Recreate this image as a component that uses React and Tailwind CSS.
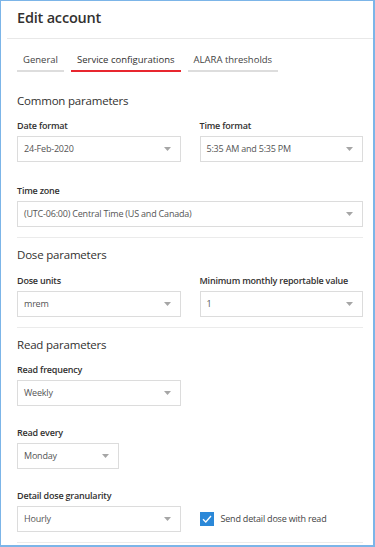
import React from 'react';

const Chevron = () => (
  <svg width="7" height="4" viewBox="0 0 7 4" className="shrink-0">
    <path d="M0 0 L7 0 L3.5 4 Z" fill="#a6a6a6" />
  </svg>
);

const Select = ({ value, className = '' }) => (
  <div className={`h-[26px] border border-[#dcdcdc] bg-white flex items-center justify-between pl-[6px] pr-[9px] ${className}`}>
    <span className="text-[9px] tracking-[-0.2px] text-[#555555] whitespace-nowrap">{value}</span>
    <Chevron />
  </div>
);

const Label = ({ children, className = '' }) => (
  <div className={`text-[9px] tracking-[-0.2px] font-semibold text-[#323130] leading-[16px] mb-[2px] ${className}`}>{children}</div>
);

const Heading = ({ children }) => (
  <div className="text-[11.5px] tracking-[-0.2px] text-[#323130] leading-[20px]">{children}</div>
);

const Divider = () => <div className="h-px bg-[#ebebeb]" />;

export default function App() {
  const tabs = [
    { label: 'General', active: false },
    { label: 'Service configurations', active: true },
    { label: 'ALARA thresholds', active: false },
  ];

  return (
    <div
      className="w-[375px] h-[547px] bg-white border-l border-t border-r-2 border-b-2 border-[#7cb5e8] overflow-hidden"
      style={{ fontFamily: '"Open Sans", "Noto Sans", sans-serif' }}
    >
      <div className="ml-[6px] h-[38px] border-b border-[#e8e8e8] flex items-center pl-[10px]">
        <h1 className="text-[14.5px] tracking-[-0.2px] font-semibold text-[#323130] leading-[24px] -mt-[4px]">Edit account</h1>
      </div>

      <div className="px-[16px] pr-[10px]">
        <div className="flex gap-[7px] mt-[13px]">
          {tabs.map(t => (
            <div
              key={t.label}
              className={`px-[6px] pb-[2px] text-[9.5px] leading-[16px] border-b-2 ${t.active ? 'border-[#e8262f] text-[#323130]' : 'border-[#dddddd] text-[#444444]'}`}
            >
              {t.label}
            </div>
          ))}
        </div>

        <div className="mt-[19px]">
          <Heading>Common parameters</Heading>
          <div className="grid grid-cols-2 gap-x-[19px] mt-[7px]">
            <div>
              <Label>Date format</Label>
              <Select value="24-Feb-2020" />
            </div>
            <div>
              <Label>Time format</Label>
              <Select value="5:35 AM and 5:35 PM" />
            </div>
          </div>
          <div className="mt-[21px]">
            <Label>Time zone</Label>
            <Select value="(UTC-06:00) Central Time (US and Canada)" />
          </div>
        </div>

        <div className="mt-[10px]">
          <Divider />
        </div>

        <div className="mt-[7px]">
          <Heading>Dose parameters</Heading>
          <div className="grid grid-cols-2 gap-x-[19px] mt-[8px]">
            <div>
              <Label>Dose units</Label>
              <Select value="mrem" />
            </div>
            <div>
              <Label>Minimum monthly reportable value</Label>
              <Select value="1" />
            </div>
          </div>
        </div>

        <div className="mt-[10px]">
          <Divider />
        </div>

        <div className="mt-[7px]">
          <Heading>Read parameters</Heading>
          <div className="grid grid-cols-2 gap-x-[19px] mt-[7px]">
            <div>
              <Label>Read frequency</Label>
              <Select value="Weekly" />
            </div>
          </div>
          <div className="mt-[19px]">
            <Label>Read every</Label>
            <Select value="Monday" className="w-[102px]" />
          </div>
          <div className="grid grid-cols-2 gap-x-[19px] mt-[19px]">
            <div>
              <Label>Detail dose granularity</Label>
              <Select value="Hourly" />
            </div>
            <div className="flex items-end">
              <div className="h-[26px] flex items-center gap-[7px]">
                <div className="w-[14px] h-[14px] bg-[#2b88d8] flex items-center justify-center">
                  <svg width="10" height="8" viewBox="0 0 10 8">
                    <path d="M1 4.2 L3.8 7 L9 1" fill="none" stroke="#ffffff" strokeWidth="1.3" />
                  </svg>
                </div>
                <span className="text-[9px] tracking-[-0.2px] text-[#444444]">Send detail dose with read</span>
              </div>
            </div>
          </div>
        </div>

        <div className="mt-[10px]">
          <Divider />
        </div>
      </div>
    </div>
  );
}
